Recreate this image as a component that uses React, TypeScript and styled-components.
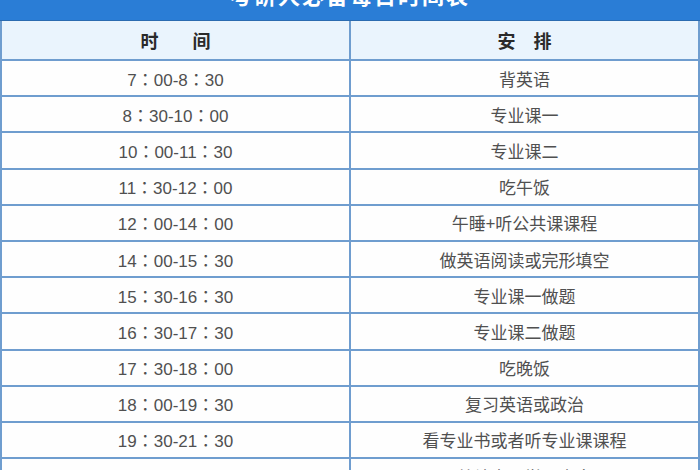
import styled, { createGlobalStyle } from 'styled-components';

const GlobalStyle = createGlobalStyle`
  html, body {
    margin: 0;
    padding: 0;
    background: #ffffff;
    overflow: hidden;
  }
  body {
    font-family: "Liberation Sans", Arial, "Noto Sans CJK SC", sans-serif;
  }
`;

const Page = styled.div`
  width: 700px;
  height: 470px;
  overflow: hidden;
  background: #fdfeff;
`;

const TitleBar = styled.div`
  height: 20px;
  background: #2a7dd6;
  border-bottom: 1px solid #2b6bb0;
  overflow: hidden;
  display: flex;
  justify-content: center;
`;

const Title = styled.h1`
  margin: -21px 0 0;
  font-size: 22px;
  line-height: 30px;
  font-weight: bold;
  letter-spacing: 2px;
  color: #ffffff;
  font-family: "Noto Sans CJK SC", sans-serif;
`;

const Table = styled.table`
  width: 700px;
  border-collapse: collapse;
  table-layout: fixed;
`;

const HeadCell = styled.th<{ $gap: number }>`
  height: 38px;
  padding: 0;
  background: #eaf4fd;
  color: #2a2a2a;
  font-size: 18px;
  font-weight: bold;
  font-family: "Noto Sans CJK SC", sans-serif;
  text-align: center;
  border: 2px solid #6f9dcf;
  border-top: none;
  word-spacing: ${({ $gap }) => $gap}px;
`;

const Cell = styled.td<{ $time?: boolean }>`
  height: 34.2px;
  padding: 0;
  text-align: center;
  color: #505050;
  font-size: 17px;
  font-family: ${({ $time }) =>
    $time
      ? '"Liberation Sans", Arial, "Noto Sans CJK TC", sans-serif'
      : '"Noto Sans CJK SC", sans-serif'};
  border: 2px solid #6f9dcf;
  background: #fefefe;
`;

const rows: [string, string][] = [
  ['7：00-8：30', '背英语'],
  ['8：30-10：00', '专业课一'],
  ['10：00-11：30', '专业课二'],
  ['11：30-12：00', '吃午饭'],
  ['12：00-14：00', '午睡+听公共课课程'],
  ['14：00-15：30', '做英语阅读或完形填空'],
  ['15：30-16：30', '专业课一做题'],
  ['16：30-17：30', '专业课二做题'],
  ['17：30-18：00', '吃晚饭'],
  ['18：00-19：30', '复习英语或政治'],
  ['19：30-21：30', '看专业书或者听专业课课程'],
  ['21：30-23：00', '总结当天学习内容'],
];

export default function App() {
  return (
    <Page>
      <GlobalStyle />
      <TitleBar>
        <Title>考研人必备每日时间表</Title>
      </TitleBar>
      <Table>
        <thead>
          <tr>
            <HeadCell $gap={30}>时 间</HeadCell>
            <HeadCell $gap={14}>安 排</HeadCell>
          </tr>
        </thead>
        <tbody>
          {rows.map(([time, task]) => (
            <tr key={time}>
              <Cell $time>{time}</Cell>
              <Cell>{task}</Cell>
            </tr>
          ))}
        </tbody>
      </Table>
    </Page>
  );
}
